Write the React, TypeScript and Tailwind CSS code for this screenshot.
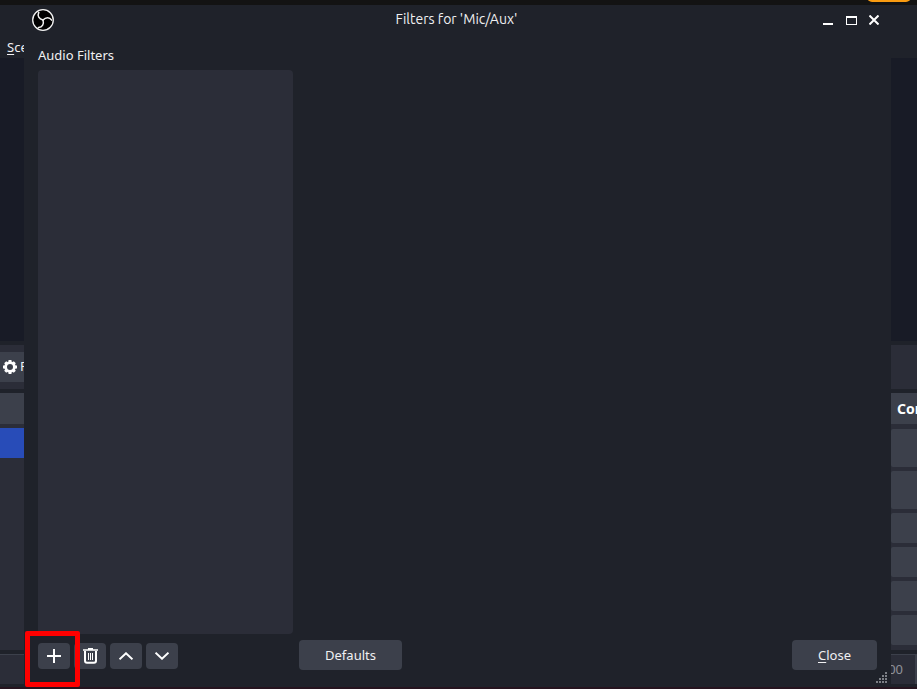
import React, { useState } from 'react';

const toolButton = "flex h-[26px] w-8 items-center justify-center rounded bg-[#3c404b] text-white hover:bg-[#4a4f5c]";
const textButton = "h-[30px] rounded bg-[#3c404b] pt-px text-[13px] hover:bg-[#4a4f5c]";

const ObsLogo = () => (
  <svg width="22" height="22" viewBox="-11 -11 22 22" fill="none" stroke="#f2f2f2" strokeLinecap="round" className="ml-2">
    <circle r="10.3" fill="#000" strokeWidth="1.3" />
    <g strokeWidth="1.5">
      <path d="M-4.2 -7.6C-6 -4 -4 -1 0 0" />
      <path d="M-4.2 -7.6C-6 -4 -4 -1 0 0" transform="rotate(120)" />
      <path d="M-4.2 -7.6C-6 -4 -4 -1 0 0" transform="rotate(240)" />
    </g>
  </svg>
);

const GearIcon = () => (
  <svg width="14" height="14" viewBox="-7 -7 14 14" fill="none" stroke="#fff" className="shrink-0">
    <circle r="4.4" strokeWidth="2.8" />
    <path d="M0 -7V-5M0 5V7M-7 0H-5M5 0H7M-4.8 -4.8L-3.6 -3.6M3.6 3.6L4.8 4.8M-4.8 4.8L-3.6 3.6M3.6 -3.6L4.8 -4.8" strokeWidth="3" />
  </svg>
);

const ResizeGrip = () => (
  <svg width="11" height="11" viewBox="0 0 11 11" fill="#7d8087" className="absolute right-1 bottom-1" shapeRendering="crispEdges">
    <path d="M9 0h2v2h-2zM6 3h2v2h-2zM9 3h2v2h-2zM3 6h2v2h-2zM6 6h2v2h-2zM9 6h2v2h-2zM0 9h2v2h-2zM3 9h2v2h-2zM6 9h2v2h-2zM9 9h2v2h-2z" />
  </svg>
);

// Slice of the main window left of the dialog
const LeftStrip = () => (
  <div className="flex w-6 shrink-0 flex-col overflow-hidden whitespace-nowrap">
    <div className="flex h-[53px] items-end pb-px pl-[7px] text-[13px] leading-5">
      <span><span className="underline underline-offset-2">S</span>cene</span>
    </div>
    <div className="flex-1 bg-[#181b26]" />
    <div className="mt-1 bg-[#2b2d38] py-[7px]">
      <button className="flex h-[30px] w-28 items-center gap-[3px] bg-[#3c404b] pl-[3px] text-[13px]">
        <GearIcon />
        Properties
      </button>
    </div>
    <div className="mt-1 h-[257px] bg-[#2b2d38]">
      <div className="h-[31px] bg-[#3c404b]" />
      <div className="mt-1 h-[30px] bg-[#284cb8]" />
    </div>
    <div className="mt-1 mb-[3px] h-[30px] border-t border-[#3c404b] bg-[#2b2d38]" />
  </div>
);

// Slice of the main window right of the dialog
const RightStrip = () => (
  <div className="flex w-[26px] shrink-0 flex-col overflow-hidden whitespace-nowrap">
    <div className="h-[53px]" />
    <div className="flex-1 bg-[#181b26]" />
    <div className="mt-1 h-11 bg-[#2b2d38]" />
    <div className="mt-1 h-[257px] bg-[#2b2d38]">
      <div className="h-[31px] bg-[#3c404b] pl-1.5 text-[14px] leading-[31px] font-bold text-white">Controls</div>
      <div className="mt-[5px] flex flex-col gap-1">
        <div className="h-[38px] rounded-l-xs bg-[#3c404b]" />
        <div className="h-[38px] rounded-l-xs bg-[#3c404b]" />
        <div className="h-[30px] rounded-l-xs bg-[#3c404b]" />
        <div className="h-[30px] rounded-l-xs bg-[#3c404b]" />
        <div className="h-[30px] rounded-l-xs bg-[#3c404b]" />
        <div className="h-[30px] rounded-l-xs bg-[#3c404b]" />
      </div>
    </div>
    <div className="mt-1 mb-[3px] flex h-[30px] justify-end border-t border-[#3c404b] bg-[#2b2d38] text-[13px] leading-7 text-[#8f9198]">
      <span className="mr-3">00</span>
      <span className="w-0.5 shrink-0 bg-[#3c404b]" />
    </div>
  </div>
);

const App = () => {
  const [filters] = useState<string[]>([]);

  return (
    <div className="flex min-h-screen flex-col bg-[#1f222a] font-['Noto_Sans','Open_Sans',sans-serif] text-[#f0f0f2]">
      <div className="flex h-[5px] justify-end overflow-hidden bg-[#131313] pr-1.5">
        <div className="-mt-2 h-2.5 w-11 rounded-full bg-[#f99b11]" />
      </div>

      <div className="flex flex-1">
        <LeftStrip />

        <main className="relative flex min-w-0 flex-1 flex-col bg-[#1f222a]">
          <header className="grid h-[30px] grid-cols-[1fr_auto_1fr] items-center">
            <ObsLogo />
            <h1 className="pr-0.5 pb-0.5 font-['Ubuntu','Open_Sans',sans-serif] text-[14px] leading-5">Filters for 'Mic/Aux'</h1>
            <div className="flex items-center justify-end gap-3 pr-3 text-white">
              <button aria-label="Minimize" className="mr-px flex h-3 w-2.5 items-end pb-px">
                <span className="h-0.5 w-full bg-white" />
              </button>
              <button aria-label="Maximize" className="h-[9px] w-[11px] border border-t-2 border-white" />
              <button aria-label="Close window">
                <svg width="10" height="10" viewBox="0 0 10 10" stroke="currentColor" strokeWidth="2">
                  <path d="M0.5 0.5l9 9M9.5 0.5l-9 9" />
                </svg>
              </button>
            </div>
          </header>

          <div className="flex flex-1 flex-col px-3.5">
            <h2 className="pt-2.5 pb-[5px] text-[13px] leading-5">Audio Filters</h2>
            <ul className="w-[255px] flex-1 rounded bg-[#2b2d38]">
              {filters.map((name) => (
                <li key={name} className="px-2 py-1 text-[13px]">{name}</li>
              ))}
            </ul>

            <footer className="mt-1.5 mb-[17px] flex items-center">
              <div className="flex w-[261px] gap-1 pt-0.5">
                <div className="relative">
                  <button aria-label="Add filter" className={toolButton}>
                    <svg width="14" height="14" viewBox="0 0 14 14" fill="currentColor">
                      <path d="M6 0h2v6h6v2h-6v6h-2v-6h-6v-2h6z" />
                    </svg>
                  </button>
                  <span className="pointer-events-none absolute -top-3 -left-[13px] z-10 h-14 w-[55px] rounded-xs border-5 border-[#ff0000]" />
                </div>
                <button aria-label="Remove filter" className={toolButton}>
                  <svg width="16" height="16" viewBox="0 0 16 16" fill="none" stroke="currentColor">
                    <path d="M1 2h15M6 0.6h5" strokeWidth="1.5" />
                    <path d="M3 3v9.8q0 2 2 2h7q2 0 2-2v-9.8" strokeWidth="2" />
                    <path d="M6.5 5v7M8.5 5v7M10.5 5v7" strokeWidth="1" />
                  </svg>
                </button>
                <button aria-label="Move up" className={toolButton}>
                  <svg width="14" height="8" viewBox="0 0 14 8" fill="none" stroke="currentColor" strokeWidth="2">
                    <path d="M0.5 7.3L7 1.3l6.5 6" />
                  </svg>
                </button>
                <button aria-label="Move down" className={toolButton}>
                  <svg width="14" height="8" viewBox="0 0 14 8" fill="none" stroke="currentColor" strokeWidth="2">
                    <path d="M0.5 0.7L7 6.7l6.5-6" />
                  </svg>
                </button>
              </div>
              <button className={`${textButton} w-[103px]`}>Defaults</button>
              <button className={`${textButton} ml-auto w-[85px]`}>
                <span className="underline underline-offset-2">C</span>lose
              </button>
            </footer>
          </div>

          <ResizeGrip />
        </main>

        <RightStrip />
      </div>

      <div className="h-0.5 bg-[#26141f]" />
    </div>
  );
};

export default App;
